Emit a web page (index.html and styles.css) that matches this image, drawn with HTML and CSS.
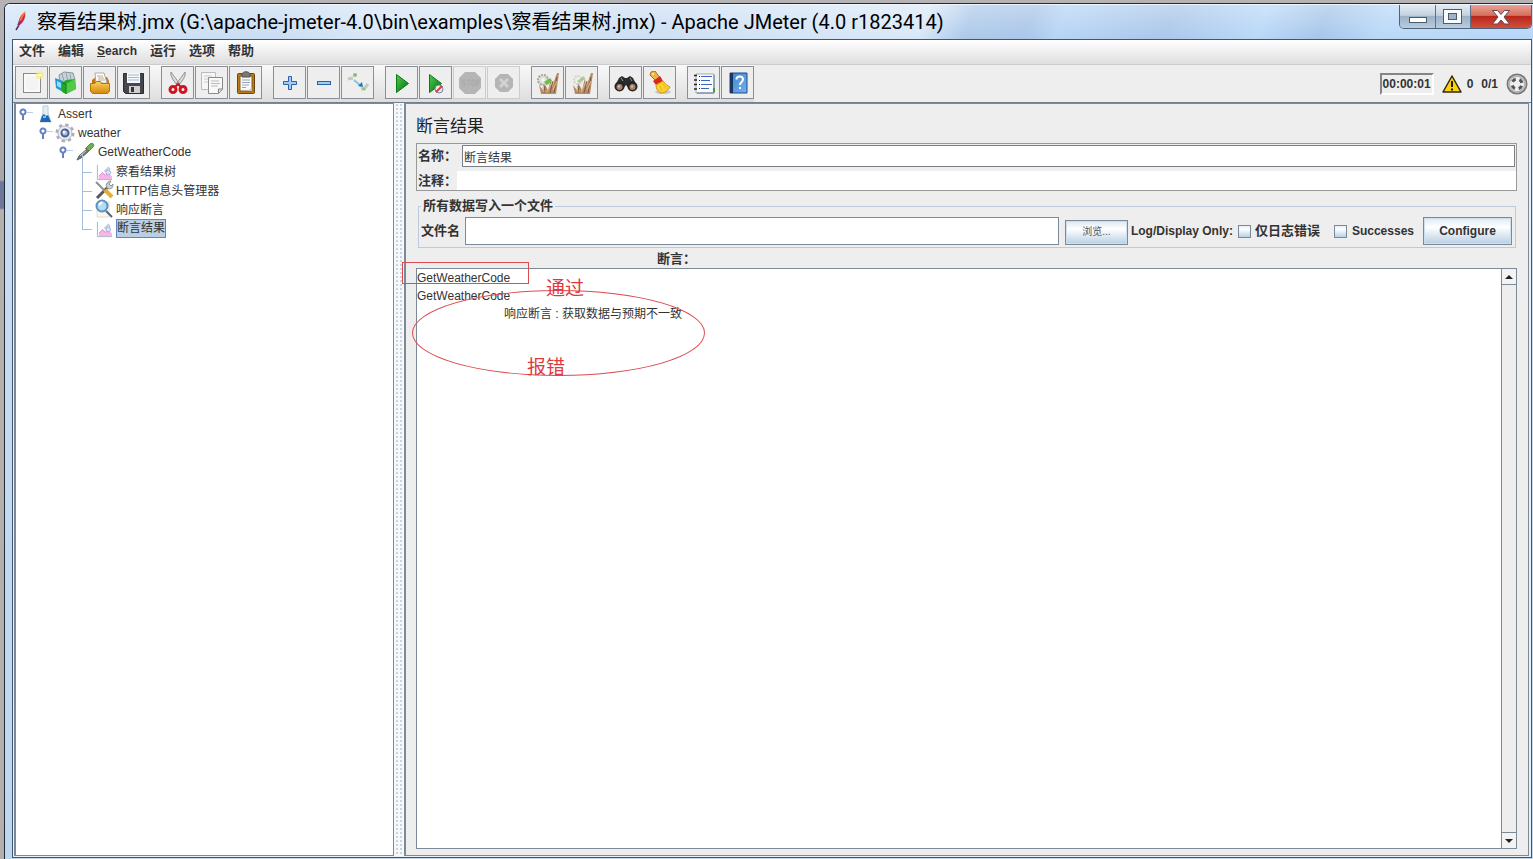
FILE: index.html
```html
<!DOCTYPE html>
<html lang="zh-CN">
<head>
<meta charset="utf-8">
<title>察看结果树.jmx - Apache JMeter</title>
<link rel="stylesheet" href="styles.css">
</head>
<body>
<svg class="defs" aria-hidden="true">
  <defs>
    <linearGradient id="gGreen" x1="0" y1="0" x2="1" y2="1"><stop offset="0" stop-color="#4ccf4c"/><stop offset="1" stop-color="#066a10"/></linearGradient>
    <linearGradient id="gGold" x1="0" y1="0" x2="0" y2="1"><stop offset="0" stop-color="#fbd25c"/><stop offset="1" stop-color="#d4860c"/></linearGradient>
    <linearGradient id="gBlue" x1="0" y1="0" x2="1" y2="1"><stop offset="0" stop-color="#3f83cf"/><stop offset="1" stop-color="#74b0ec"/></linearGradient>
    <symbol id="chart" viewBox="0 0 18 18">
      <path d="M1.500 1v15.500H17" fill="none" stroke="#a9b3ca"/>
      <path d="M3 16v-3l4-4 3 3 3-2 4 3v3z" fill="#f6b4e8"/>
      <path d="M3 13l4-4 3 3 3-3" fill="none" stroke="#df84cd"/>
      <path d="M9 8l4-4 2 2" fill="none" stroke="#c0cbe8" stroke-width="2"/>
      <circle cx="13" cy="9" r="2.500" fill="#dbe4fa" stroke="#9dabd8"/>
    </symbol>
    <symbol id="roots" viewBox="0 0 24 24">
      <path d="M5 23l-2-9 4 5 1-7 4 7 3-12 1 9 5-14h2l-3 21z" fill="#b98d66"/>
      <path d="M8 22l1-7M14 22l3-12M18 22l3-16" stroke="#80593a" stroke-width="1" fill="none"/>
      <path d="M11 21l4-8M7 16l1 5M17 19l4-9" stroke="#dcbc98" fill="none"/>
    </symbol>
  </defs>
</svg>
<div class="desktop">
<div class="window">
  <header class="titlebar">
    <svg class="feather" viewBox="0 0 14 22"><path d="M2 20l3-5" stroke="#54306a" stroke-width="1.500"/><path d="M4 16C4 10 7 4 11 2c1 5-1 11-7 14z" fill="#d7263d"/><path d="M6 13C6 9 9 5 11 2" stroke="#f28a3c" stroke-width="1.500" fill="none"/><path d="M4 15l3-4" stroke="#8c2b8c" stroke-width="2"/></svg>
    <h1 class="title">察看结果树.jmx (G:\apache-jmeter-4.0\bin\examples\察看结果树.jmx) - Apache JMeter (4.0 r1823414)</h1>
    <div class="caption">
      <button class="cap min" aria-label="Minimize"><svg width="20" height="20" viewBox="0 0 20 20"><rect x="1.500" y="10.500" width="17" height="5" fill="#fff" stroke="#4b5b70"/></svg></button>
      <button class="cap max" aria-label="Maximize"><svg width="20" height="20" viewBox="0 0 20 20"><rect x=".5" y="2.500" width="18" height="14" fill="#f8fafc" stroke="#4b5b70"/><rect x="5.500" y="6.500" width="8" height="6" fill="#9fb4cc" stroke="#4b5b70"/></svg></button>
      <button class="cap close" aria-label="Close"><svg width="20" height="20" viewBox="0 0 20 20"><path d="M1.500 3.500h5l3.500 4 3.500-4h5l-5.500 6.500 5.500 7h-5l-3.500-4-3.500 4h-5l5.500-7z" fill="#fff" stroke="#5d4a55"/></svg></button>
    </div>
  </header>
  <div class="client">
    <nav class="menubar">
      <button>文件</button><button>编辑</button><button><u>S</u>earch</button><button>运行</button><button>选项</button><button>帮助</button>
    </nav>
    <div class="toolbar">
      <div class="group">
        <button aria-label="New"><svg viewBox="0 0 24 24"><rect x="3.500" y="2.500" width="17" height="19" fill="#f4f4f2" stroke="#8c8c8c"/><path d="M5 4h14v16H5z" fill="none" stroke="#fff"/><circle cx="20" cy="4" r="4" fill="#f6ee7c" opacity=".75"/><circle cx="20" cy="4" r="1.500" fill="#fffbd0"/></svg></button>
        <button aria-label="Templates"><svg viewBox="0 0 24 24"><path d="M5 4l5-3 9 1 2 7-8 3-7-2z" fill="#c9d3d6" stroke="#879599"/><path d="M8 3l2 7M12 2l2 8M16 3l1 6" stroke="#8aa3b3"/><path d="M1 7l8 3v11l-7-4z" fill="#1e9bd3"/><path d="M3 10l4 2v5l-4-2z" fill="#9adcf5"/><path d="M8 12l4-3 9-1 1 10-10 5-4-2z" fill="#22a82b"/><path d="M12 13l9-5 1 10-10 5z" fill="#54c84a"/><path d="M8 12l4 1v10" stroke="#118019" fill="none"/></svg></button>
        <button aria-label="Open"><svg viewBox="0 0 24 24"><path d="M4 9l4-3h11l2 4v9H4z" fill="#bd780f"/><path d="M7 2h9l3 10H8z" fill="#fff" stroke="#ababab"/><path d="M9 5h6M10 7h6M10 9h7" stroke="#b7a98a"/><path d="M2.500 12.500h4l2-2h4l1 2h8v8l-2 2h-15l-2-2z" fill="url(#gGold)" stroke="#b87508"/></svg></button>
        <button aria-label="Save"><svg viewBox="0 0 24 24"><path d="M1.500 2.500h20v20h-18l-2-2z" fill="#45474c" stroke="#2b2c30"/><path d="M5 2h13v10H5z" fill="#f7faff"/><path d="M6 4h11M6 6.500h11M6 9h11" stroke="#9bb8d6"/><path d="M7 15h11v7H7z" fill="#cfcfcf"/><path d="M9 16h3v5H9z" fill="#33353a"/></svg></button>
      </div>
      <div class="group">
        <button aria-label="Cut"><svg viewBox="0 0 24 24"><path d="M5 1c-1 4 2 8 7 14l2-2C10 8 7 4 5 1zM19 1c1 4-2 8-7 14l-2-2c4-5 7-9 9-12z" fill="#dedede" stroke="#8e8e8e"/><g fill="none" stroke="#ce1521" stroke-width="3"><ellipse cx="7" cy="18.500" rx="3" ry="3"/><ellipse cx="17" cy="18.500" rx="3" ry="3"/></g><path d="M9 16l3-3 3 3" fill="none" stroke="#ce1521" stroke-width="2"/></svg></button>
        <button aria-label="Copy"><svg viewBox="0 0 24 24"><path d="M1.500 1.500h14v17h-14z" fill="#f6f6f6" stroke="#bbb"/><path d="M4 5h8M4 8h5M4 11h4" stroke="#ccc"/><path d="M8.500 6.500h14v12l-4 4h-10z" fill="#f8f8f8" stroke="#8a8a8a"/><path d="M18.500 22v-4h4" fill="#ddd" stroke="#838383"/><path d="M11 10h8M11 12.500h9M11 15h7" stroke="#bbb"/></svg></button>
        <button aria-label="Paste"><svg viewBox="0 0 24 24"><rect x="3.500" y="2.500" width="17" height="20" rx="1" fill="#b97916" stroke="#6d4510"/><path d="M6 5h12v15H6z" fill="#f9f9f9" stroke="#82601f"/><path d="M8 3c1-3 7-3 8 0v3H8z" fill="#777b77" stroke="#555"/><path d="M8 9h8M8 11.500h8M8 14h7M8 16.500h4" stroke="#98a4b4"/><path d="M14 20l4-4v4z" fill="#c5c5c5"/></svg></button>
      </div>
      <div class="group">
        <button aria-label="Expand all"><svg viewBox="0 0 24 24"><path d="M10.500 5.500h3v5h5v3h-5v5h-3v-5h-5v-3h5z" fill="#a4cbf2" stroke="#2960ac"/></svg></button>
        <button aria-label="Collapse all"><svg viewBox="0 0 24 24"><rect x="5.500" y="10.500" width="13" height="3" fill="#a4cbf2" stroke="#2960ac"/></svg></button>
        <button aria-label="Toggle"><svg viewBox="0 0 24 24"><path d="M2 8l5-1M15 18l4-1 3-4" fill="none" stroke="#c3cbbb" stroke-width="3"/><circle cx="9" cy="4" r="2" fill="#8fb780"/><path d="M8 9l7 6" stroke="#8fc0e2" stroke-width="2"/><path d="M12 15l5 1-1-5z" fill="#2377bd"/><circle cx="18" cy="18" r="1.500" fill="#93c36b"/></svg></button>
      </div>
      <div class="group">
        <button aria-label="Start"><svg viewBox="0 0 24 24"><path d="M6.500 3.500l12 9-12 9z" fill="url(#gGreen)" stroke="#0b7a16"/></svg></button>
        <button aria-label="Start no pauses"><svg viewBox="0 0 24 24"><path d="M5.500 3.500l12 9-12 9z" fill="url(#gGreen)" stroke="#0b7a16"/><circle cx="15" cy="18" r="4" fill="#e9eef8" stroke="#6f84a8"/><path d="M12 21l6-6" stroke="#e03a3a" stroke-width="2"/></svg></button>
        <button aria-label="Stop" disabled><svg viewBox="0 0 24 24"><path d="M7 1h10l6 6v10l-6 6H7l-6-6V7z" fill="#b5b5b5"/><path d="M4 9h4M4 9v3h3v3H4M9 9h4M11 9v6M14 9v6h3V9zM19 15V9h2v3h-2" fill="none" stroke="#a8a8a8"/></svg></button>
        <button aria-label="Shutdown" disabled><svg viewBox="0 0 24 24"><path d="M8 3h8l5 5v8l-5 5H8l-5-5V8z" fill="#b5b5b5"/><path d="M8 8l8 8M16 8l-8 8" stroke="#d2d2d2" stroke-width="3"/></svg></button>
      </div>
      <div class="group">
        <button aria-label="Clear"><svg viewBox="0 0 24 24"><use href="#roots"/><circle cx="7" cy="9" r="5" fill="#dde0d8" stroke="#a3aa9c" stroke-dasharray="2 1" stroke-width="2"/><circle cx="7" cy="9" r="2" fill="#f3f3ef"/><path d="M8 11l6-4 2 3-5 4z" fill="#6dbd49"/></svg></button>
        <button aria-label="Clear all"><svg viewBox="0 0 24 24"><use href="#roots"/><circle cx="8" cy="9" r="4" fill="none" stroke="#d0d4ca" stroke-width="2" stroke-dasharray="2 1"/><path d="M7 10l7-5 1 3-6 4z" fill="#a9c892"/></svg></button>
      </div>
      <div class="group">
        <button aria-label="Search"><svg viewBox="0 0 24 24"><path d="M5 7l3-2 3 2h2l3-2 3 2 4 8-7 4-4-5-4 5-7-4z" fill="#2b2b2c"/><circle cx="5.500" cy="15.500" r="5" fill="#252525"/><circle cx="18.500" cy="15.500" r="5" fill="#252525"/><circle cx="5.500" cy="16" r="3" fill="#a88369"/><circle cx="18.500" cy="16" r="3" fill="#a88369"/><circle cx="5" cy="15.500" r="1" fill="#e7c9b3"/><circle cx="18" cy="15.500" r="1" fill="#e7c9b3"/><path d="M7 7l2 3M16 7l2 3" stroke="#999"/></svg></button>
        <button aria-label="Reset search"><svg viewBox="0 0 24 24"><ellipse cx="15" cy="21" rx="8" ry="2" fill="#c7c7c7"/><path d="M2 4l1-3 4-1 5 7-4 3z" fill="#f0b53f" stroke="#b66c0b"/><circle cx="5" cy="3" r="1" fill="#fff0b0"/><path d="M5 10l7-5 3 5-7 4z" fill="#d8281c"/><path d="M8 14l7-4c2 3 5 5 7 6-2 4-5 6-10 6-2-2-4-4-4-8z" fill="#fbd22e" stroke="#cf960e"/><path d="M12 15l2 5M15 13l4 5" stroke="#e3b32a"/></svg></button>
      </div>
      <div class="group">
        <button aria-label="Function helper"><svg viewBox="0 0 24 24"><path d="M4 3h18v19H4z" fill="#f9fbff" stroke="#a3a9b5"/><path d="M22 4v18H5" fill="none" stroke="#6b7890"/><path d="M2 4.500h3M2 9h3M2 13.500h3M2 18h3" stroke="#222" stroke-width="1.500"/><path d="M9 5.500h11M9 9.500h9M9 13.500h11M9 17.500h8" stroke="#3c63bd"/><path d="M7 5.500h1M7 9.500h1M7 13.500h1M7 17.500h1" stroke="#222"/><path d="M21 17h2v4h-2z" fill="#35a144"/></svg></button>
        <button aria-label="Help"><svg viewBox="0 0 24 24"><path d="M4 2h17v20H4z" fill="url(#gBlue)" stroke="#1e4b89"/><path d="M4 2h3v20H4z" fill="#1a365f"/><path d="M10.500 8.500c0-4 6.500-4 6.500 0 0 2.500-3 2.500-3 5.500M14 16v2" fill="none" stroke="#fff" stroke-width="2"/></svg></button>
      </div>
      <div class="status">
        <output class="timer">00:00:01</output>
        <svg class="warn" viewBox="0 0 20 18"><path d="M10 1L19 17H1z" fill="#fbd20c" stroke="#2e2a12" stroke-width="1.500" stroke-linejoin="round"/><path d="M10 6v6M10 13.500v2" stroke="#231d06" stroke-width="2"/></svg>
        <span>0</span><span class="threads">0/1</span>
        <svg class="wheel" viewBox="0 0 22 22"><circle cx="11" cy="11" r="9.500" fill="#efefef" stroke="#777" stroke-width="2"/><circle cx="11" cy="11" r="8" fill="none" stroke="#b5b5b5" stroke-width="2"/><circle cx="11" cy="11" r="5" fill="none" stroke="#555" stroke-width="3" stroke-dasharray="3.900 3.954" stroke-dashoffset="-2"/></svg>
      </div>
    </div>
    <div class="split">
      <aside class="treepane">
        <ul class="tree">
          <li><div class="node"><button class="knob" aria-label="Toggle"></button><svg viewBox="0 0 20 20"><path d="M8 2h5v7l3 9H5l3-9z" fill="#e5edf4" stroke="#c0cad4"/><path d="M7 12l2-2 2 2 2-1 3 7H5z" fill="#1c67be"/><path d="M8 13h3" stroke="#7dc0f0" stroke-width="2"/></svg><span>Assert</span></div>
            <ul>
              <li><div class="node"><button class="knob" aria-label="Toggle"></button><svg viewBox="0 0 20 20"><circle cx="10" cy="10" r="8" fill="none" stroke="#a8adb6" stroke-width="3" stroke-dasharray="3.200 3.080"/><circle cx="10" cy="10" r="7" fill="#eceef2" stroke="#b4b8c1"/><circle cx="10" cy="10" r="3.500" fill="#aebddc" stroke="#4a5f94" stroke-width="2"/><circle cx="9" cy="9" r="1.500" fill="#f2f7ff"/></svg><span>weather</span></div>
                <ul>
                  <li><div class="node"><button class="knob" aria-label="Toggle"></button><svg viewBox="0 0 20 20"><path d="M2 18l2-4 8-7 2 2-8 7z" fill="#707572" stroke="#5d615f"/><path d="M5 14l6-5" stroke="#c5cbc7"/><path d="M10 6l4 4M11 6l4-4c3-2 5 1 3 3l-4 4z" fill="#6fae57" stroke="#598a44"/></svg><span>GetWeatherCode</span></div>
                    <ul class="leaves">
                      <li><div class="node"><svg viewBox="0 0 20 20"><use href="#chart" x="2" y="3" width="17" height="17"/></svg><span>察看结果树</span></div></li>
                      <li><div class="node"><svg viewBox="0 0 20 20"><path d="M3 18L14 7" stroke="#555a5e" stroke-width="3"/><path d="M13 8c-2-4 1-7 4-7l-2 3 2 2 2-2c0 4-2 6-6 4z" fill="#ccd2d2" stroke="#8b9292"/><path d="M2 2l9 9" stroke="#8a9192" stroke-width="2"/><path d="M11 10l7 7" stroke="#e4b033" stroke-width="4"/></svg><span>HTTP信息头管理器</span></div></li>
                      <li><div class="node"><svg viewBox="0 0 20 20"><path d="M3 3h12v15H3z" fill="#f9f7f0" stroke="#e0dccf"/><path d="M12 12l6 6" stroke="#52677a" stroke-width="2"/><circle cx="8" cy="7" r="5.500" fill="#b4dcf4" stroke="#5a93bd" stroke-width="2"/><path d="M5 6l3-3" stroke="#fff" stroke-width="2"/></svg><span>响应断言</span></div></li>
                      <li><div class="node"><svg viewBox="0 0 20 20"><use href="#chart" x="2" y="3" width="17" height="17"/></svg><span class="selected">断言结果</span></div></li>
                    </ul>
                  </li>
                </ul>
              </li>
            </ul>
          </li>
        </ul>
      </aside>
      <div class="divider"></div>
      <main class="panel">
        <h2>断言结果</h2>
        <div class="props">
          <div class="prop name"><label for="name">名称：</label><input id="name" type="text" value="断言结果"></div>
          <div class="prop comment"><label for="comment">注释：</label><input id="comment" type="text"></div>
        </div>
        <fieldset>
          <legend>所有数据写入一个文件</legend>
          <div class="filerow">
            <label for="file">文件名</label><input id="file" type="text">
            <button class="btn browse">浏览...</button>
            <span class="log">Log/Display Only:</span>
            <label class="check"><input type="checkbox">仅日志错误</label>
            <label class="check ok"><input type="checkbox">Successes</label>
            <button class="btn configure">Configure</button>
          </div>
        </fieldset>
        <label class="caption-label" for="result">断言：</label>
        <div class="result">
          <textarea id="result" readonly>GetWeatherCode
GetWeatherCode
&#9;响应断言 : 获取数据与预期不一致</textarea>
          <div class="scroll"><button aria-label="Scroll up"><svg viewBox="0 0 10 6"><path d="M1 5l4-4 4 4z" fill="#222"/></svg></button><div class="track"></div><button aria-label="Scroll down"><svg viewBox="0 0 10 6"><path d="M1 1h8L5 5z" fill="#222"/></svg></button></div>
          <div class="mark box"></div>
          <div class="mark oval"></div>
          <span class="note pass">通过</span>
          <span class="note fail">报错</span>
        </div>
      </main>
    </div>
  </div>
</div>
</div>
</body>
</html>
```
FILE: styles.css
```css
* { box-sizing: border-box; }
html, body { height: 100%; margin: 0; }
body { font: 12px/18px "Liberation Sans", "Noto Sans CJK SC", sans-serif; color: #333; overflow: hidden; }
button, input, textarea { font: inherit; color: inherit; margin: 0; padding: 0; border: 0; border-radius: 0; }
ul { list-style: none; margin: 0; padding: 0; }
.defs { position: absolute; width: 0; height: 0; }

.desktop { height: 100vh; padding: 3px 0 0 4px; background: linear-gradient(#b5b3b4, #aaa6a7 180px, #6d7799 182px, #6d7799 208px, #b5afae 210px); }
.window { height: 100%; display: flex; flex-direction: column; padding: 0 1px 1px 7px; border: 1px solid #1f2a36; border-width: 1px 0 0 1px; border-top-left-radius: 6px; background: linear-gradient(#d6e6f7, #c8dcf2 240px, #bcd8f0); }

.titlebar { height: 35px; flex: none; display: flex; align-items: flex-start; margin: 0 -1px 0 -7px; padding-left: 9px; border-top: 1px solid #eef6fd; border-top-left-radius: 5px;
  background: linear-gradient(rgba(255,255,255,.3), rgba(255,255,255,0)), linear-gradient(110deg, #d4e5f7 0, #c9ddf3 18%, #d7e6f7 24%, #cddff4 42%, #d9e8f8 60%, #adc9ea 63%, #a9c5e8 67%, #b6d4f5 69%, #aac6e9 76%, #b9d8f8 82%, #a7c5e9 86%, #b9d8f8 90%, #b6d6f7 100%); }
.feather { width: 14px; height: 22px; margin-top: 5px; }
.title { flex: 1; margin: 0 0 0 9px; font: 400 20px/34px Roboto, "Noto Sans CJK SC", sans-serif; color: #000; white-space: nowrap; }
.caption { display: flex; margin-right: 1px; border: 1px solid #4e627c; border-top: 0; border-radius: 0 0 5px 5px; overflow: hidden; }
.cap { width: 36px; height: 23px; display: grid; place-items: center; background: linear-gradient(#e3ebf3, #c3d1df 45%, #9db1c7 50%, #b9cde0); border-right: 1px solid #5b708a; }
.cap.max { width: 35px; }
.cap.close { width: 60px; border: 0; background: linear-gradient(#eaa295, #d5705e 45%, #b8271b 50%, #d3503a); }

.client { flex: 1; min-height: 0; display: flex; flex-direction: column; border: 1px solid #44566e; background: #eee; }
.menubar { flex: none; display: flex; gap: 13px; height: 25px; padding: 0 6px 2px; background: linear-gradient(#fff, #dedede); border-bottom: 1px solid #ccc; }
.menubar button { background: none; font-size: 13px; font-weight: 700; }
.menubar button:nth-child(3) { font-size: 12px; }

.toolbar { flex: none; display: flex; gap: 11px; height: 38px; padding: 1px 2px 4px; background: linear-gradient(#f9f9f9, #ddd); border-bottom: 1px solid #74808e; }
.group { display: flex; gap: 1px; background: #eee; }
.group button { width: 33px; height: 33px; display: grid; place-items: center; background: #eee; border: 1px solid #8a8f96; }
.group button:disabled { border-color: #ccc; }
.group svg { width: 24px; height: 24px; }
.status { flex: 1; display: flex; align-items: center; justify-content: flex-end; margin: -1px -2px -4px -11px; padding-right: 3px; background: #eee; font-weight: 700; }
.timer { height: 22px; padding: 0 1px; border: 2px solid; border-color: #858585 #fff #fff #858585; }
.warn { width: 20px; height: 18px; margin: 0 5px 0 8px; }
.threads { margin: 0 8px; }
.wheel { width: 22px; height: 22px; }

.split { flex: 1; min-height: 0; display: grid; grid-template-columns: 380px 10px 1fr; padding: 0 2px 1px 1px; }
.treepane { background: #fff; border: 1px solid #7a8a99; border-width: 1px 1px 1px 2px; }
.divider { background: radial-gradient(circle, #ccd3de 1px, transparent 1px) 1px 0 / 4px 4px, #f7f8fa; }
.tree ul { padding-left: 20px; }
.node { display: flex; align-items: center; height: 19px; }
.node svg { flex: none; width: 20px; height: 20px; margin-right: 3px; }
.node span { color: #333; white-space: nowrap; }
.tree li { position: relative; }
.knob { flex: none; width: 16px; height: 14px; margin: 2px 0 0 3px; background:
  radial-gradient(circle, #fff 1px, #6382bf 2px, #6382bf 3px, transparent 4px) 0 0 / 8px 8px no-repeat,
  linear-gradient(#6382bf, #6382bf) 3px 6px / 2px 6px no-repeat,
  linear-gradient(#b8cfe5, #b8cfe5) 8px 4px / 6px 1px no-repeat; }
.tree .leaves { margin-left: 26px; padding-left: 0; }
.leaves li { padding-left: 12px; }
.leaves li::before { content: ""; position: absolute; left: 0; top: -8px; width: 9px; height: 19px; border: 1px solid #a6bfdc; border-width: 0 0 1px 1px; }
.leaves .node svg { margin-right: 2px; }
.leaves .node span { margin-top: 2px; }
.node .selected { background: #b8cfe5; border: 1px solid #6382bf; line-height: 17px; }

.panel { min-width: 0; display: flex; flex-direction: column; padding: 12px 11px 6px 10px; border: 1px solid #7a8a99; border-width: 1px 1px 1px 2px; background: #eee; }
.panel h2 { margin: 0; font-size: 17px; line-height: 22px; font-weight: 400; color: #222; }
.props { display: flex; flex-direction: column; gap: 4px; margin-top: 5px; padding: 1px 0 0 1px; border: 1px solid #999; }
.prop { display: flex; align-items: center; font-size: 13px; }
.prop label, legend, .filerow > label, .caption-label { font-weight: 700; }
.prop label { width: 39px; white-space: nowrap; }
.prop input { flex: 1; min-width: 0; background: #fff; }
.name input { height: 22px; margin: 0 1px 0 5px; padding: 0 1px; border: 1px solid #7a7f86; font-size: 12px; }
.comment input { height: 19px; }
fieldset { min-width: 0; margin: 6px 1px 0 2px; padding: 0 3px 2px 2px; border: 1px solid #bccbd9; }
legend { margin-left: 0; padding: 0 2px; font-size: 13px; line-height: 18px; }
.filerow { display: flex; align-items: center; margin-top: 2px; font-weight: 700; }
.filerow > label { font-size: 13px; white-space: nowrap; }
#file { flex: 1; min-width: 0; height: 28px; margin: 0 6px 0 5px; background: #fff; border: 1px solid #7a8a99; }
.btn { height: 28px; border: 1px solid #7a8a99; background: linear-gradient(#dde8f3, #fff 35%, #b8cfe5); box-shadow: inset 0 0 0 1px #cfdeec; }
.browse { width: 63px; height: 25px; margin-top: 2px; font-size: 10px; font-weight: 400; color: #555; }
.log { margin: 0 5px 0 3px; white-space: nowrap; }
.filerow .check { display: flex; align-items: center; gap: 4px; margin-right: 14px; }
.filerow .ok { gap: 5px; margin-right: 9px; font-size: 12px; }
.check input { appearance: none; width: 13px; height: 13px; border: 1px solid #7a8a99; background: linear-gradient(#e3edf7, #fff 30%, #b8cfe5); }
.configure { width: 89px; font-weight: 700; }
.caption-label { margin: 2px 0 0 241px; font-size: 13px; }
.result { position: relative; flex: 1; min-height: 0; display: flex; border: 1px solid #7a8a99; background: #fff; }
.result textarea { flex: 1; min-width: 0; resize: none; outline: 0; overflow: hidden; background: #fff; white-space: pre; tab-size: 87px; line-height: 18px; }
.scroll { width: 15px; display: flex; flex-direction: column; border-left: 1px solid #7a8a99; }
.scroll button { height: 16px; display: grid; place-items: center; border-bottom: 1px solid #7a8a99; background: #f3f3f3; }
.scroll button:last-child { border-bottom: 0; border-top: 1px solid #7a8a99; }
.scroll svg { width: 10px; height: 6px; }
.track { flex: 1; background: #eee; }

.mark { position: absolute; border: 1px solid #dc4b50; pointer-events: none; }
.box { left: -15px; top: -7px; width: 127px; height: 22px; }
.oval { left: -5px; top: 21px; width: 293px; height: 86px; border-radius: 50%; }
.note { position: absolute; font-size: 19px; line-height: 24px; color: #e0383e; }
.pass { left: 129px; top: 8px; }
.fail { left: 110px; top: 87px; }
```
